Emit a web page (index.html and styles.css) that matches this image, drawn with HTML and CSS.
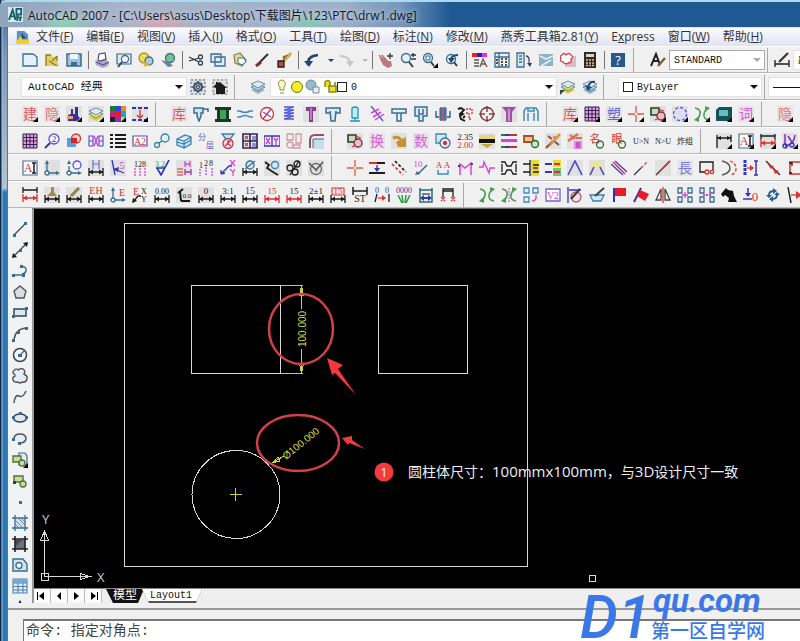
FILE: index.html
```html
<!DOCTYPE html>
<html lang="zh-CN">
<head>
<meta charset="utf-8">
<title>AutoCAD 2007</title>
<link rel="stylesheet" href="styles.css">
</head>
<body>
<div class="window">
  <header class="titlebar">
    <svg class="app-icon" viewBox="0 0 16 16" aria-hidden="true">
      <rect width="16" height="16" fill="#d4ecec"/>
      <path d="M1 14L5 3l3 11M2 10h5M9 2v6h5V2zM8 11h7M10 9v6M13 10v5" fill="none" stroke="#14606c" stroke-width="2"/>
    </svg>
    <span class="title-text">AutoCAD 2007 - [C:\Users\asus\Desktop\下载图片\123\PTC\drw1.dwg]</span>
  </header>
  <div class="body">
    <nav class="menubar">
      <svg class="doc-icon" viewBox="0 0 16 16" aria-hidden="true">
        <path d="M2 1h8l4 4v8H2z" fill="#5d8fc4"/><path d="M0 15l6-9 2 4h7v5z" fill="#f2cf27"/><path d="M7 3l5 6H7z" fill="#234c8b"/>
      </svg>
      <a href="#">文件(<u>F</u>)</a><a href="#">编辑(<u>E</u>)</a><a href="#">视图(<u>V</u>)</a><a href="#">插入(<u>I</u>)</a><a href="#">格式(<u>O</u>)</a><a href="#">工具(<u>T</u>)</a><a href="#">绘图(<u>D</u>)</a><a href="#">标注(<u>N</u>)</a><a href="#">修改(<u>M</u>)</a><a href="#">燕秀工具箱2.81(<u>Y</u>)</a><a href="#">E<u>x</u>press</a><a href="#">窗口(<u>W</u>)</a><a href="#">帮助(<u>H</u>)</a>
    </nav>

    <div class="row">
      <div class="toolbar" data-tools="new open save | print preview publish globe | cut copy paste brush match | undo drop:s redo dropg:s | pan zoomrt zoomwin zoomprev | props dcenter palettes sheet markup calc | help"></div>
      <div class="toolbar styles">
        <button class="tool" data-icon="textstyle" aria-label="文字样式"></button>
        <span class="combo muted w-style"><select aria-label="文字样式"><option>STANDARD</option></select></span>
      </div>
      <div class="toolbar styles tight">
        <button class="tool" data-icon="dimstyle" aria-label="标注样式"></button>
        <span class="combo w-rest"><select aria-label="标注样式"><option>副本</option></select></span>
      </div>
    </div>

    <div class="row">
      <div class="toolbar workspaces">
        <span class="combo w-workspace"><select aria-label="工作空间"><option>AutoCAD 经典</option></select></span>
        <button class="tool" data-icon="gear" aria-label="工作空间设置"></button>
        <button class="tool" data-icon="home" aria-label="我的工作空间"></button>
      </div>
      <div class="toolbar layers">
        <button class="tool" data-icon="layerman" aria-label="图层特性"></button>
        <span class="combo w-layer">
          <svg class="state" viewBox="0 0 66 16" aria-hidden="true">
            <path d="M6 1a4 4 0 0 1 3 7v3H5V8a4 4 0 0 1 1-7zM5 14h4" fill="#fdfbc0" stroke="#8d8a46"/>
            <circle cx="22" cy="8" r="5.500" fill="#f6ee25" stroke="#77711a"/>
            <circle cx="36" cy="6" r="5" fill="#9ab9cc" stroke="#6e8798"/><path d="M38 8h6v6h-6z" fill="#e8eef2" stroke="#6e8798"/>
            <path d="M50 8V3q3-3 5 0v5M54 7h7v6h-7zM60 7V3" fill="#e9e32a" stroke="#8d861a" stroke-width="1.500"/>
          </svg>
          <i class="swatch"></i>
          <select aria-label="图层"><option>0</option></select>
        </span>
        <button class="tool" data-icon="layercur" aria-label="置为当前"></button>
        <button class="tool" data-icon="layerprev" aria-label="上一个图层"></button>
      </div>
      <div class="toolbar colors">
        <span class="combo w-color"><i class="swatch"></i><select aria-label="颜色"><option>ByLayer</option></select></span>
      </div>
      <div class="toolbar linetype">
        <span class="combo w-rest"><i class="line"></i></span>
      </div>
    </div>

    <div class="row">
      <div class="toolbar" data-tools="build+ hide+ hand+ layers+ palette+ dashdim+"></div>
      <div class="toolbar" data-tools="lib nozzle spool beam noentry spring bolt tee capsule diagspring teeb block coupling chain target screw bracket"></div>
      <div class="toolbar" data-tools="lib+ grid+ plastic+ cross+ shapes+ dashcircle+ greens+ screen+ word+"></div>
      <div class="toolbar" data-tools="hide+"></div>
    </div>
    <div class="row">
      <div class="toolbar" data-tools="grid lens boolean eight list a2 linkc box3d strata funnel tablered xy pinks fillet"></div>
      <div class="toolbar" data-tools="shapes swapcn turn number circsel values bands lines copyc bolt1 bolt2 name look un nu explode"></div>
      <div class="toolbar" data-tools="dimk+ ai+ dimr+ trim+"></div>
    </div>
    <div class="row">
      <div class="toolbar" data-tools="ai axes axeso hdim arrow5 n123m check32 hhred n123 xyline odim oleader oo oslash"></div>
      <div class="toolbar" data-tools="cross updown twodash ten aa zigm zign ends break1 break2 vee vee2 slashes slashd slash long boxo arcs ticks redline rbracket"></div>
    </div>
    <div class="row">
      <div class="toolbar" data-tools="dimrr dimbrush dimpen dimeh axese exy dim000 lead0 dim0 dim31 dim15b dim15r dim15 dim21 dim15x dim51 dimoo dimgrass dimbox dimx"></div>
      <div class="toolbar" data-tools="greens greens2 shapesb v2 pencirc bowl flag1 flag2 mirror array1 array2 cursor zero recycle rightred"></div>
    </div>

    <main class="workspace">
      <div class="drawbar" data-tools="line xline pline polygon rect arc circle cloud spline ellipse ellarc insert block2 point hatch gradient region table up:t"></div>
      <section class="model">
        <svg class="drawing" role="img" aria-label="模型空间">
          <g transform="translate(-34 -209)" fill="none" shape-rendering="crispEdges">
            <g stroke="#d8d8d8">
              <path d="M124.500 223.500H527.500V566.500H124.500z"/>
              <path d="M191.500 285.500H280.500V373.500H191.500zM378.500 285.500H467.500V373.500H378.500z"/>
              <circle cx="236" cy="494.500" r="44"/>
              <path d="M41.500 573.500h7v7h-7zM44.500 576.500V532M44.500 576.500H90M40.500 540.500h8L44.500 531zM80.500 573.500v6L90 576.500z"/>
              <path d="M589.500 575.500h6v6h-6z"/>
            </g>
            <g stroke="#cccf45">
              <path d="M281 285.500h22M281 373.500h22M301.500 286V309M301.500 349V373M230 494.500h12M235.500 488v13"/>
              <path d="M301.500 286l-2 9h4zM301.500 373l-2-9h4zM272 463l12-7M272 463l6-6 2 4z"/>
            </g>
          </g>
          <g transform="translate(-34 -209)">
            <text class="dimension" text-anchor="middle" transform="translate(306 329) rotate(-90)">100.000</text>
            <text class="dimension" transform="translate(286 460) rotate(-39)">Ø100.000</text>
            <text class="axis" x="42" y="524">Y</text><text class="axis" x="97" y="582">X</text>
            <g fill="none" stroke="#d2404a" stroke-width="2.500">
              <ellipse cx="301" cy="329" rx="32" ry="35"/><ellipse cx="298" cy="443" rx="41" ry="28"/>
            </g>
            <g fill="#f23a3f">
              <path d="M327 358l16 7-5 4 18 26-21-22-3 2zM342 438l10-2v4l13 9-16-6-1 2z"/>
              <circle cx="384" cy="472" r="9.500"/>
            </g>
            <text class="badge" x="384" y="477" text-anchor="middle">1</text>
            <text class="note" x="408" y="477">圆柱体尺寸：<tspan class="latin">100mmx100mm</tspan>，与<tspan class="latin">3D</tspan>设计尺寸一致</text>
          </g>
        </svg>
        <div class="tabs">
          <div class="pager">
            <button aria-label="第一个"><svg viewBox="0 0 16 14"><path d="M3 3h1v8H3zM10 3v8L5 7z"/></svg></button>
            <button aria-label="上一个"><svg viewBox="0 0 16 14"><path d="M10 3v8L6 7z"/></svg></button>
            <button aria-label="下一个"><svg viewBox="0 0 16 14"><path d="M6 3v8l5-4z"/></svg></button>
            <button aria-label="最后一个"><svg viewBox="0 0 16 14"><path d="M6 3v8l5-4zM12 3h1v8h-1z"/></svg></button>
          </div>
          <button class="tab active">模型</button>
          <button class="tab">Layout1</button>
        </div>
      </section>
    </main>

    <footer class="command">
      <label class="sr" for="cmd">命令行</label>
      <input id="cmd" class="prompt" value="命令: 指定对角点:">
    </footer>
  </div>

  <div class="watermark">
    <span class="mark">D1</span>
    <span class="site"><b>qu.com</b><span>第一区自学网</span></span>
  </div>
</div>
<script src="icons.js"></script>
</body>
</html>
```
FILE: styles.css
```css
* { box-sizing: border-box; }

body {
  margin: 0;
  font-family: "Open Sans", "Noto Sans CJK SC", sans-serif;
  font-size: 12px;
  color: #222;
}

.window {
  position: relative;
  display: flex;
  flex-direction: column;
  height: 100vh;
  overflow: hidden;
  background: linear-gradient(90deg, #12294a 0, #12294a 1px, #a9cde4 2px, transparent 3px), linear-gradient(#3f6c9c 0, #7f9bb8 60px, #b4c3d2 188px, #2b78b4 192px, #2b78b4 100%);
}

.titlebar {
  flex: none;
  display: flex;
  align-items: center;
  gap: 5px;
  height: 27px;
  padding-left: 8px;
  border-top: 2px solid #a8dcec;
  border-radius: 6px 0 0 0;
  background:
    radial-gradient(30px 14px at 65px 22px, #8fd0b0 0, transparent 100%),
    radial-gradient(30px 14px at 310px 22px, #86c6b4 0, transparent 100%),
    radial-gradient(36px 16px at 160px 22px, #d2a6b2 0, transparent 100%),
    linear-gradient(90deg, #8ea5bd 0, #a7b5ca 130px, #9fb0c9 340px, #7796bb 400px, #1f5892 450px, #1f5892 100%);
  color: #10182c;
}

.app-icon { width: 15px; height: 15px; }
.title-text { white-space: nowrap; text-shadow: 0 0 5px #dfe9f4; }

.body {
  flex: 1;
  display: flex;
  flex-direction: column;
  min-height: 0;
  margin-left: 7px;
  border-left: 1px solid #68727e;
  background: #f0f0f0;
}

.menubar {
  flex: none;
  display: flex;
  align-items: center;
  gap: 13px;
  height: 19px;
  padding-left: 7px;
  overflow: hidden;
  background: linear-gradient(#fbfbff, #e0e3f5);
  border-top: 1px solid #dfe6ee;
}
.menubar a { color: #333; text-decoration: none; white-space: nowrap; line-height: 18px; }
.doc-icon { width: 15px; height: 15px; margin-right: -7px; }

.row {
  flex: none;
  display: flex;
  height: 27px;
  padding-top: 2px;
  overflow: hidden;
  border-bottom: 1px solid #b8b8b8;
  box-shadow: inset 0 1px #fff;
}

.toolbar {
  flex: none;
  display: flex;
  align-items: center;
  padding: 0 4px 0 12px;
  border-right: 1px solid #a8a8a8;
}
.toolbar:first-child { padding-left: 11px; }
.toolbar:last-child { border-right: 0; }

.tool {
  flex: none;
  display: grid;
  place-items: center;
  width: 22px;
  height: 21px;
  padding: 0;
  border: 0;
  background: none;
}
.tool svg { display: block; width: 16px; height: 16px; overflow: hidden; }
.tool.s { width: 12px; }
.tool.t { height: 12px; }
.sep { width: 1px; height: 18px; margin: 0 2px 0 3px; background: #777; }

.combo {
  flex: none;
  display: flex;
  align-items: center;
  height: 20px;
  background: #fff;
  border: 1px solid #e2e2e2;
  position: relative;
}
.combo select {
  appearance: none;
  flex: 1;
  min-width: 0;
  height: 18px;
  padding: 0 4px;
  border: 0;
  background: none;
  color: #111;
  font: 10px "Liberation Mono", "Noto Sans CJK SC", monospace;
}
.combo::after {
  content: "";
  margin-right: 3px;
  border: 4px solid transparent;
  border-top-color: #111;
  border-bottom: 0;
}
.combo.muted { border-color: #aaa; }
.combo.muted::after { border-top-color: #aaa; }
.w-workspace { width: 166px; }
.combo.w-workspace select { padding-left: 6px; font-size: 11px; }
.w-style { width: 96px; }
.w-layer { width: 287px; }
.w-color { width: 144px; }
.w-rest { width: 120px; }
.swatch { flex: none; width: 10px; height: 10px; border: 1px solid #222; }
.state { flex: none; width: 66px; height: 16px; margin: 0 -4px 0 4px; }
.line { flex: 1; height: 1px; margin: 0 4px; background: #111; }

.workspaces { padding-right: 3px; }
.toolbar.workspaces { padding-left: 13px; }
.toolbar.layers { padding: 0 2px 0 12px; }
.toolbar.layers .combo { margin-left: 1px; }
.toolbar.colors { padding: 0 2px 0 14px; }
.toolbar.colors .swatch { margin-left: 4px; }
.toolbar.linetype { padding: 0 0 0 3px; }
.toolbar.styles { padding: 0 2px 0 13px; }
.toolbar.styles.tight { padding: 0 0 0 3px; }

.workspace {
  flex: 1;
  display: flex;
  min-height: 0;
}

.drawbar {
  flex: none;
  display: flex;
  flex-direction: column;
  align-items: center;
  width: 24px;
  padding-top: 10px;
  overflow: hidden;
  background: #f0f2f4;
}

.model {
  flex: 1;
  display: flex;
  flex-direction: column;
  min-width: 0;
  border-left: 2px solid #9a9a9a;
  border-top: 1px solid #666;
}
.drawing { flex: 1; display: block; width: 100%; min-height: 0; background: #000; }
.dimension { fill: #d9dc4c; font: 10px "Liberation Sans", sans-serif; }
.axis { fill: #ccc; font: 13px "Open Sans", sans-serif; }
.badge { fill: #fff; font: 12px "Open Sans", sans-serif; }
.note { fill: #eee; font: 14px "Open Sans", "Noto Sans CJK TC", sans-serif; }
.latin { font-size: 15px; }

.tabs {
  flex: none;
  display: flex;
  height: 15px;
  background: #efefef;
  border-top: 1px solid #888;
}
.pager { display: flex; }
.pager button { width: 17px; height: 14px; padding: 0; border: 0; border-right: 1px solid #bbb; background: #fafafa; }
.pager svg { display: block; width: 16px; height: 14px; }
.tab {
  padding: 0 10px 0 8px;
  border: 0;
  background: linear-gradient(#fff, #fff) 0 0 / 100% 12px no-repeat, #555;
  clip-path: polygon(0 0, 100% 0, calc(100% - 6px) 100%, 7px 100%);
  font: 10px/12px "Liberation Mono", "Noto Sans CJK SC", monospace;
  color: #111;
}
.tab:not(.active) { margin-left: -2px; }
.tab.active { margin-left: 4px; padding: 0 7px; background: #111; color: #fff; font-size: 12px; }

.command {
  flex: none;
  margin-top: 5px;
  padding: 9px 0 0 15px;
  border-top: 2px solid #999;
}
.prompt {
  display: block;
  width: 100%;
  height: 22px;
  padding: 0 2px 4px;
  border: 0;
  border-top: 2px solid #777;
  border-left: 1px solid #777;
  background: #fff;
  color: #444;
  font: 14px "Liberation Mono", "Noto Sans CJK SC", monospace;
}
.sr { position: absolute; clip-path: inset(50%); width: 1px; height: 1px; overflow: hidden; }

.watermark {
  position: absolute;
  right: 35px;
  bottom: 0;
  display: flex;
  align-items: flex-end;
  color: #3b78e7;
  pointer-events: none;
}
.mark { font: italic 500 60px/46px Roboto, sans-serif; }
.site { display: flex; flex-direction: column; }
.site b { padding-left: 2px; font: italic 700 33px/36px Roboto, sans-serif; }
.site span { font: 500 19px/22px "Noto Sans CJK SC", sans-serif; }
```
FILE: icons.js
```js
const K = '#1c1c1c', R = '#dd2f2f', B = '#3434b8', G = '#2f9a3a', M = '#d942d9', S = '#3a6c90', O = '#c8922c', P = '#a03aa8';

// Shape helpers; every icon is drawn on a 16 x 16 grid.
const p = (d, stroke = K, w = 1.3, fill = 'none') => `<path d="${d}" stroke="${stroke}" stroke-width="${w}" fill="${fill}"/>`;
const f = (d, fill = K) => `<path d="${d}" fill="${fill}"/>`;
const c = (x, y, r, stroke = K, fill = 'none', w = 1.3) => `<circle cx="${x}" cy="${y}" r="${r}" stroke="${stroke}" fill="${fill}" stroke-width="${w}"/>`;
const t = (s, x, y, size, fill = K, family = 'Liberation Serif') =>
  `<text x="${x}" y="${y}" font-size="${size}" fill="${fill}" font-family="${family}, Noto Sans CJK SC, serif" text-anchor="middle">${s}</text>`;
const cn = (s, fill) => f('M0 0h16v16H0z', '#e6e4e6') + t(s, 8, 13, 14, fill, 'Noto Sans CJK SC');
const bg = f('M0 0h16v16H0z', '#e0e0e1');
const dim = (col = K, y = 12) => p(`M1 ${y - 4}v8M15 ${y - 4}v8M1 ${y}h14`, col) + f(`M1 ${y}l4-2.500v5zM15 ${y}l-4-2.500v5z`, col);
const label = (s, col = K, line = K, size = 9) => t(s, 8, 7, size, col) + dim(line);
const corner = f('M16 11v5h-5z', '#000');
const ax = p('M3 2v11h11', S) + f('M3 0l2 4H1zM16 13l-4-2v4z', S) + c(3, 13, 2, S, '#fff');
const lay = (a, b2) => f('M1 11l7-3 7 3-7 4z', a) + p('M1 8l7-3 7 3-7 4z', S, 0.7, b2) + p('M1 5l7-3 7 3-7 4z', S, 0.7, '#dde8ef');
const green = p('M1 2q6 1 5 6t-5 6M15 14q-6-1-5-6t5-6', '#4f9f50', 1.6) + f('M5 10l-5 4 5 2zM11 6l5-4-5-2z', '#4f9f50');
const squares = p('M1 1h4v5H1zM11 1h4v5h-4zM1 10h4v5H1zM11 10h4v5h-4z', S);
const gridp = 'M1 1h14v14H1zM1 4.500h14M1 8h14M1 11.500h14M4.500 1v14M8 1v14M11.500 1v14';
const flagp = (a) => p('M3 1v14', B, 2) + f(a, '#e81c24');

const icons = {
  new: p('M1 2h10l4 3v9H1z', S, 1.3, '#e4f0f8'),
  open: f('M2 14V3h6l1 2h4v3l2 6z', '#e2cf5c') + p('M2 14V3h5M8 9l5-5M13 4v5M5 9l8 5', '#8a7a28'),
  save: p('M1 2h14v12H1z', S, 1.5, '#9cc2dc') + f('M4 2h8v5H4z', '#eef5fa') + f('M5 10h6v4H5z', S),
  print: f('M1 9l11-2 3 4-1 3-5 2-7-3z', '#aaa4c8') + p('M4 8l1-6 6-1 1 6-6 2z', '#4d4a73', 1.2, '#fff') + p('M2 10l7 3 6-3', '#4d4a73', 1),
  preview: p('M1 2h14v10H1z', S, 1.2, '#dce9f3') + c(9, 7, 3.5, S, '#fff') + p('M6 10l-4 5', '#345', 2),
  publish: c(6, 6, 5, '#a8922c', '#f1dc57') + c(11, 9, 4, S, '#b2cbdc') + f('M4 9l8 3-5 3z', '#d9b735'),
  globe: c(10, 6, 4.5, S, '#7bbf8b') + f('M1 8l8 2 4 4-5 1z', '#6d7fa0'),
  cut: p('M1 5l10 5M1 9l10-3', '#234') + c(12.500, 5, 2, '#345') + c(12.500, 11, 2, '#345'),
  copy: p('M1 2h10v8H1zM5 5h10v9H5z', S, 1.3, '#dcebf5'),
  paste: p('M2 3l6-2 6 7-4 6-7-3z', '#8b873f', 1.3, '#ddd9a3') + p('M6 6h6l2 4-4 3-4-2z', S, 1, '#fff'),
  brush: p('M2 14l5-4', '#7b3030', 3) + p('M6 10l8-8', '#3a2b2b', 2),
  match: f('M2 9h6v6H2z', '#c4483a') + p('M8 9L15 1M8 9l0-4 6-2', '#8f7420', 2.4) + p('M8 9L15 1', '#ead04a', 1.2) + p('M2 9h6v6H2z'),
  undo: p('M4 13Q3 4 14 3', '#1f4877', 2.6) + f('M0 9h9l-4 6z', '#1f4877'),
  redo: p('M2 4Q12 4 12 12', '#c3c7cb', 2.2) + f('M8 9h8l-4 6z', '#c3c7cb'),
  drop: f('M5 7h6l-3 3z', '#1f3c66'), dropg: f('M5 7h6l-3 3z', '#b8b8b8'),
  pan: f('M1 5l4 2 1-2 4 4 3 0 1 5-4 2-5-3z', '#bd7780') + p('M1 3l6 6M4 3l5 6', '#bd7780', 1.6) + p('M12 1v6M9 4h6', '#334'),
  zoomrt: c(6, 6, 4.5, S, '#e6f0f6') + p('M9 10l4 5', '#344', 2) + p('M13 1v4M11 3h5M11 7h5', '#334'),
  zoomwin: c(6, 6, 4.5, S, '#e6f0f6') + p('M4 4h4v4H4z', S, 1) + p('M9 10l3 4', '#344', 2) + corner,
  zoomprev: c(7, 7, 4.5, S, '#e6f0f6') + p('M10 10l3 4', '#344', 2) + p('M7 8q0-5 7-5', '#1f4877', 2) + f('M4 6h7l-4 5z', '#1f4877'),
  props: f('M0 1h5v4H0z', '#e22') + f('M5 1h5v4H5z', '#22c') + f('M10 1h5v4h-5z', '#d3d') + p('M2 8h5M2 11h5M2 14h5M8 15l3-8 4 8M9 12h4', '#655'),
  dcenter: p('M1 1h14v14H1zM5 1v14M1 5h14', S) + p('M7 7h2M11 7h2M7 10h2M11 10h2M7 13h2M11 13h2M2 8h2M2 11h2', K),
  palettes: p('M1 1h7v14H1zM3 4h3M3 7h3M3 10h3', S, 1.3, '#dbe8f1') + p('M10 4q4 0 3 8', '#345') + f('M11 11h5l-2 4z', '#345'),
  sheet: f('M1 2h14v12H1z', '#8fb2c2') + p('M2 4l6 3 7-3M3 14l10-6', '#e0edf2', 1.8),
  markup: f('M5 4h11v11H5z', '#d9bcc3') + p('M2 3q2-3 4 0 3-3 5 0 3 2 0 4 1 4-3 4-3 2-5-1-4-1-2-4-2-2 1-3z', '#d33c52', 1.3, '#fff'),
  calc: f('M2 0h12v16H2z', '#33291f') + f('M4 2h8v3H4z', '#d8d6c8') + p('M4 8h8M4 11h8M4 13.500h8', '#d8c6b0', 1.3).replace('/>', ' stroke-dasharray="2 1"/>'),
  help: f('M1 1h14v14H1z', '#24598d') + t('?', 8, 13, 13, '#fff', 'Open Sans'),
  textstyle: p('M1 14L6 2l4 11M3 9h6', '#222', 2) + p('M8 14l7-8', '#7a6032', 2.4),
  dimstyle: p('M1 8v7M15 8v7M1 12h14', K) + p('M5 10l9-9', '#433', 2.3),
  gear: bg + p('M1 1h14v14H1z', S, 1).replace('/>', ' stroke-dasharray="2 2"/>') + c(8, 8, 4, '#456', '#aab8c2', 2) + p('M8 2v3M8 11v3M2 8h3M11 8h3M4 4l2 2M10 10l2 2M12 4l-2 2M6 10l-2 2', '#456', 1.6) + c(8, 8, 1.5, '#456', '#fff'),
  home: bg + p('M1 1h14v14H1z', '#777', 1).replace('/>', ' stroke-dasharray="2 2"/>') + f('M1 8l3-3V3h2v1l2-1 7 6h-2v6H4V9z', K),
  layerman: lay('#9eb6c6', '#b9cdd9'), layercur: lay('#e0cf3c', '#e8dc68') + f('M0 16v-5h5z', '#345'),
  layerprev: lay('#8fb0c6', '#b9cdd9') + p('M6 8Q8 2 13 3', '#1f4877', 2) + f('M3 6l7 2-4 4z', '#1f4877'),

  build: cn('建', '#e0555a'), hide: cn('隐', '#df7678'), lib: cn('库', '#e0555a'), plastic: cn('塑', '#6464d8'), word: cn('词', '#e354dd'),
  swapcn: cn('换', '#dd5bdd'), number: cn('数', '#dd5bdd'), long: cn('長', '#7a7ae0'),
  hand: bg + f('M2 9l3-1V3h2v5h2V1h3v9l2 2-3 3H2z', '#37308e') + f('M1 10h6v3H1z', '#ef9c78'),
  layers: bg + lay('#d7cf39', '#ece487'),
  palette: f('M0 0h5v5H0z', '#1e7b2d') + f('M5 0h6v5H5z', '#2c40ea') + f('M11 0h5v5h-5z', '#ee8a20') + f('M0 5h5v6H0z', '#c0207c') + f('M5 5h6v6H5z', '#e81d1d') + f('M11 5h5v6h-5z', '#19a4d8') + f('M0 11h5v5H0z', '#222') + f('M5 11h6v5H5z', '#7638c0') + f('M11 11h5v5h-5z', '#e0d43a'),
  dashdim: bg + p('M0 2h16M0 14h16', B, 2).replace('/>', ' stroke-dasharray="4 2"/>') + p('M8 4v8M5 9l3 3 3-3', R),
  nozzle: p('M1 2h9v5H8v3l-2 5-2-5V7H1zM10 3h5v3', S, 1.5, '#cde3ef'),
  spool: f('M0 1h16v3h-2v9h2v3H0v-3h2V4H0z', '#173a22') + f('M5 4h6v9H5z', '#41a05a'),
  beam: p('M0 5h3q5 3 10 0h3M0 11h3q5-3 10 0h3', '#4a8abb', 1.6, '#d8eaf5'),
  noentry: c(8, 8, 6.5, R, '#fff') + p('M12 3L4 13M4 6l8 5', P),
  spring: p('M3 1h10L3 4h10L3 7h10L3 10h10L3 13h10', '#4d53d8'),
  bolt: bg + f('M3 1h10v4h-3v11H6V5H3z', '#8b3a93') + p('M8 2v12', '#d9a0da'),
  tee: p('M1 2h14v5h-4V5l-1 10H6L5 5v2H1z', S, 1.5, '#d6ebf4'),
  capsule: p('M5 2q3-2 6 0v10H5zM3 15h10M8 12v3', '#2490c0', 1.3, '#c3edf4'),
  diagspring: p('M2 0l12 15', '#4d53d8') + p('M2 7l8-4M4 11l8-5M6 14l9-6', M, 1.5),
  teeb: p('M1 3h14v4H1zM6 7h4v8H6z', S, 1.5, '#e4f1f7'),
  block: p('M2 1h12v9h-4v5H6v-5H2zM6 3v5h4V3', S, 1.5, '#d6ebf4'),
  coupling: f('M4 2h8v12H4z', '#86a9d0') + p('M6 1v14M10 1v14M1 5v6h3M15 5v6h-3', '#2a4f88') + p('M8 1v14', R),
  chain: p('M1 3l3-1 3 2-3 3 2 1-3 2 1 3 4 2M2 8l4-1M6 12l2-2', K, 1.9) + p('M9 3h6v6M9 7h3v6h3', R).replace('/>', ' stroke-dasharray="2 1"/>'),
  target: c(8, 8, 6.5, '#5c3030') + p('M8 0v6M8 10v6M0 8h6M10 8h6', '#a03a3a', 1.5),
  screw: bg + f('M1 1h14l-4 5v10H5V6z', '#a050a8') + p('M8 3v12', '#e6b6e6'),
  bracket: p('M1 15V5l2-3h10l2 3v10M5 15V7M11 15V7M5 2v3h6V2', '#3c8cb4', 1.5),
  grid: f('M1 1h14v14H1z', '#d7a6dc') + p(gridp, '#3b1b50', 1),
  cross: p('M8 0v16M0 8h16', '#e2583a', 1.3) + f('M7 7h2v2H7z', '#fff'),
  shapes: bg + p('M1 2h8v7H1z', '#2c3c2c', 1.6, '#c2dcc6') + c(11, 10, 4, '#7b2c3c', '#e6c1c6') + p('M8 3l6 2M5 14l4-2', R),
  dashcircle: bg + c(8, 8, 6.5, '#5253d6', '#dedef0').replace('/>', ' stroke-dasharray="3 2"/>'),
  greens: green, greens2: green + p('M8 1v14', M, 1).replace('/>', ' stroke-dasharray="2 1"/>'),
  screen: f('M3 1h13v10l-3 4H0V4z', '#15525a') + f('M3 4h9v6H3z', '#62c0b9'),

  lens: c(10, 6, 5, '#5a5acb', '#f4f4ff') + t('2', 10, 9, 9, B) + p('M6 10l-5 5', B, 2),
  boolean: c(10, 5.500, 4.500, R, '#f5d3c8') + f('M1 5h9v9H1z', '#5d9dd9') + f('M5 5h6v5H5z', '#d8212f'),
  eight: p('M1 3h4v10H1zM1 8h4M11 3h4v10h-4zM11 8h4', '#4f4fc2', 1.1) + p('M6 3l4 10M10 3L6 13', M, 1.5),
  list: p('M5 2h11M5 6h11M5 10h11M5 14h11M0 2h3M0 6h3M0 10h3M0 14h3', K, 2),
  a2: p('M1 3h14v10H1z', '#4f4fc2', 1.2, '#fff') + t('A2', 8, 12, 10, R),
  linkc: c(11, 5, 4, '#3e7fa0', '#e0f2f6') + c(3, 12, 2.5, '#3e7fa0', '#e0f2f6') + p('M5 10l3-2', S),
  box3d: p('M1 6l8-4 6 2v7l-7 4-7-3zM1 6l7 2 7-4M8 8v7M1 9l7 2 7-4', '#3a80b4', 1.3, '#c7e4f2'),
  strata: t('分', 4, 7, 8, '#5a5ad0') + t('层', 12, 15, 8, '#5a5ad0'),
  funnel: p('M2 1h12l-4 5H6z', '#3a80b4', 1.3, '#c7e4f2') + c(8, 10.500, 5, '#a8406c', '#f5dfe6') + p('M8 7v4l3 2M5 13l6-6', R),
  tablered: p('M1 1h14v14H1zM8 1v14M1 8h14', '#262650', 1.6, '#f3eff4') + p('M3 3l3 3M6 3L3 6M3 10l3 3M6 10l-3 3', R, 1.2) + p('M10 4h4M10 6h4M10 11h4M10 13h4', B, 1),
  xy: p('M0 3h16v10H0zM8 3v10', B) + p('M2 5l4 6M6 5l-4 6M10 5l2 3 2-3M12 8v4', M, 1.4),
  pinks: p('M1 1h6v6H1zM10 1h5v9h-5zM7 12h7v3H7z', '#cf9aa0') + c(4, 12, 3, '#cf9aa0'),
  fillet: f('M5 6h11v10H5z', '#cbdce3') + p('M2 15V7q0-5 5-5h9', '#99505a', 2) + p('M5 15V6h11', S, 1),
  turn: bg + p('M2 5q7-3 9 5', '#c99230', 3) + f('M5 9l10-5v10H7z', '#c99230'),
  circsel: p('M1 1h10v9H1z', '#3c86b0', 1.3, '#d4eaf2') + c(10, 10, 5, '#3c6fa0', '#e3edf6') + c(10, 10, 1.5, R, R),
  values: t('2.35', 8, 7, 9, K) + t('2.00', 8, 15, 9, R),
  bands: bg + f('M0 2h16v4H0z', '#e5d578') + f('M0 6h16v4H0z', '#111') + f('M2 11h12l-6 4z', '#bda93c'),
  lines: f('M0 6h16v3H0z', '#e03ad8') + f('M0 1h4v2H0zM0 13h4v2H0z', '#347b30') + f('M4 1h4v2H4zM4 13h4v2H4z', '#333c9c') + f('M8 1h8v2H8zM8 13h8v2H8z', '#b83636'),
  copyc: p('M1 3h9v6H1z', '#a84f22', 1.8, '#f1c690') + c(12, 11, 3.5, '#236a2c', '#cae6c8'),
  bolt1: bg + p('M1 15l7-7M3 3l4 3M9 8l5 4', '#86573a', 2) + p('M5 12L15 1M8 4l5 1', '#e18c3c', 2.4),
  bolt2: bg + p('M1 8L11 1M3 2l5 4M9 5h6', '#e06a55', 2.2) + f('M7 8h8v8H7z', '#e58ae0') + p('M9 10h4M9 12h4M9 14h4', '#a02bb0', 1),
  name: t('名', 6, 10, 11, R) + c(11, 11.500, 3.500, '#2b6b35'),
  look: t('眼', 6, 10, 11, R) + c(11, 11.500, 3.500, '#2b6b35'),
  un: t('U&gt;N', 8, 11, 8), nu: t('N&gt;U', 8, 11, 8), explode: t('炸组', 8, 11, 8),
  dimk: bg + p('M1 2v13M15 2v7M1 5h14', K) + f('M1 5l4-2v4zM15 5l-4-2v4z', K),
  ai: p('M1 1h14v14H1z', '#4b6f90', 1.2, '#fff') + t('A', 6, 12, 12, R) + p('M12 3v10M10 3h4M10 13h4', K, 1.5),
  dimr: bg + dim(R, 10) + p('M1 1v5M15 1v5M1 3h14', K),
  trim: bg + p('M3 1v11M3 13Q12 12 13 2M6 3l5 8', '#7c2ec4', 1.5) + c(3, 13, 2, B) + c(10, 12, 2, B),

  axes: bg + ax, axeso: ax.replace('M3 2v11h11', 'M3 6v7h11') + c(11, 5, 4, '#5555d0', '#f3f3ff'),
  hdim: bg + p('M5 0v9M11 0v9M5 4h6', '#6b6bd0', 1.2) + dim(),
  arrow5: bg + p('M2 0l3 15M14 13L4 9', B) + f('M3 9l6-2-1 5z', B) + t('5', 12, 9, 10, M),
  n123m: t('128', 8, 7, 8) + p('M3 8v8M8 8v8M13 8v8', M).replace('/>', ' stroke-dasharray="2 1"/>'),
  check32: t('3.2', 6, 7, 8, G) + p('M2 8h9M3 8l4 7L15 0', B, 1.6),
  hhred: bg + p('M9 1v6M14 1v6M9 4h5', M) + p('M1 9h6M1 12h6M1 15h6', R, 1) + p('M9 9v6M15 9v6M9 12h6', P),
  n123: p('M2 9v7M8 7v9M14 8v8', M).replace('/>', ' stroke-dasharray="2 1"/>') + t('1', 3, 8, 8) + t('2', 8, 6, 8) + t('8', 13, 6, 8),
  xyline: p('M1 14L9 6h3M1 14l4-1M1 14V10', B) + p('M10 0l5 6M15 0l-5 6M10 9l3 3 2-3M13 12v4', M, 1.2),
  odim: c(8, 5, 4, S, '#d5e9f2') + p('M3 9L13 1', S) + dim(),
  oleader: bg + p('M1 2l4 3-2 3 6 4 5 3', K, 1.8) + c(11, 5, 3.500, '#3e7fb0', '#d5e9f2'),
  oo: bg + p('M4 15L13 1', K) + c(4, 8, 3, K) + c(11, 4, 3, K) + c(9, 12, 3, K),
  oslash: bg + c(8, 9, 5.500, '#666') + p('M1 3l8 8M15 2l-7 8', '#555', 1.6),
  updown: p('M0 3h16M0 13h16', K, 1.8) + p('M0 3h8', R, 2) + p('M8 5v6', B) + f('M5 8h6l-3 4z', B),
  twodash: p('M4 1l11 11', K, 1.6).replace('/>', ' stroke-dasharray="3 2"/>') + p('M1 4l11 11', R, 1.6).replace('/>', ' stroke-dasharray="3 2"/>'),
  ten: t('10', 5, 7, 9, M) + p('M5 14l9-9', S, 1.6) + f('M2 15l5-1-3-3z', S),
  aa: t('A', 4, 8, 9, R) + t('A', 12, 8, 9, R) + p('M3 10v4h10v-4', '#3c8cc0', 1.5),
  zigm: p('M3 15V4l5 4 6-5v12', M, 1.5) + p('M1 6h2M14 4h2', K),
  zign: p('M0 7h4l1-5 5 11 1-5h5', M, 1.4),
  ends: p('M0 2h4l2 4h4l2-4h4M0 14h4l2-4h4l2 4h4M1 4v8M15 4v8', K, 1.3),
  break1: f('M8 0h8v16H8z', '#e5de39') + p('M0 4h7M0 12h7M10 5h6M10 12h6M7 0v16', K) + p('M10 8h5', R, 2),
  break2: f('M8 0h8v7H8z', '#e5de39') + f('M8 8h8v8H8z', '#70c47d') + p('M0 4h7M0 12h7', B, 2) + p('M9 4h6M9 12h6', R, 2),
  vee: bg + p('M1 15L8 1l7 14', '#4646cc', 1.6),
  vee2: bg + f('M4 2h8l2 6H2z', '#ece690') + p('M1 15l4-8M15 15l-4-8', '#4646cc', 1.6),
  slashes: p('M0 4l12 11M4 1l12 11', '#4646cc', 1.4) + p('M2 2l12 12', R, 1.4),
  slashd: p('M1 15l7-7', '#333') + p('M8 8l7-7', R).replace('/>', ' stroke-dasharray="3 2"/>'),
  slash: bg + p('M1 15L15 1', '#6b3a3a', 1.6) + p('M8 8l7-7', R, 1.4),
  boxo: p('M6 12H1V2h13v8', K) + c(8, 12, 2, R) + c(13, 12, 1.7, R),
  arcs: p('M1 1q8 2 8 7t-8 7', '#555', 1.5) + p('M9 1q6 2 6 8 0 4-5 6', R, 1.3).replace('/>', ' stroke-dasharray="3 2"/>'),
  ticks: p('M2 0v16', B, 3).replace('/>', ' stroke-dasharray="3 1"/>') + p('M13 1v14M11 1h4M11 15h4', B, 1.5) + p('M4 8h6', R) + f('M7 5l4 3-4 3z', R),
  redline: p('M1 1l14 14', '#5b2a2a', 1.5) + f('M3 5l6 1-3 3zM8 9l6 2-4 3z', R),
  rbracket: p('M16 2H3v12h13', R, 1.5) + p('M2 3h3v3M2 13h3', K),

  dimrr: dim(R, 11) + p('M1 0v6M15 0v6M1 3h14'), dimbrush: bg + f('M7 0h3v5l3 4H3l4-4z', '#a08a4f') + dim(),
  dimpen: bg + p('M5 9l8-8', '#8f8349', 3) + dim(), dimeh: label('EH', R, K, 10),
  axese: ax + t('E', 12, 9, 10, R), exy: t('E', 4, 8, 10, R) + t('X', 12, 7, 8) + t('Y', 12, 15, 8) + p('M1 15l5-6h3') + f('M0 16l1-5 4 3z'),
  dim000: label('0.00', K, K, 8), lead0: bg + p('M2 6l5-4M4 4l1 10M5 14h9', K, 2) + t('0.0', 11, 11, 7), dim0: bg + label('0'), dim31: label('3:1'),
  dim15b: label('15', B, K, 10), dim15r: label('15', R, R), dim15: label('15', K, R), dim21: label('2±1'),
  dim15x: p('M2 1h12v7H2z', R, 1.1) + label('15', R, K), dim51: p('M1 0v8M15 0v8M1 4h14', K, 1.5) + t('ST', 8, 15, 10),
  dimoo: t('0', 3, 6, 8, B) + t('0', 13, 6, 8, B) + p('M1 15l2-8M15 7v8', K) + p('M4 11h6', R) + f('M8 8l4 3-4 3z', R),
  dimgrass: t('0000', 8, 6, 8, B) + p('M2 8l4 8M6 8l1 8M10 8l-1 8M14 8l-4 8', G, 1.5),
  dimbox: p('M2 1v14h12V1M2 3h12M4 7h8', '#2b6b6b', 1.5) + p('M3 11h10', B, 2) + f('M2 11l4-3v6zM14 11l-4-3v6z', B),
  dimx: p('M3 10V2h10v8M3 4h10', K) + p('M1 10l4 4M5 10l-4 4M11 10l4 4M15 10l-4 4', R, 1.2),
  shapesb: p('M1 1h5v5H1zM10 1h5v5h-5zM1 10h5v5H1z', '#3c8cc0') + p('M9 14q5 0 4-6', M, 1.4),
  v2: p('M1 2h14v12H1z', '#6868c8', 1.3, '#fff') + t('V2', 8, 12, 10, M),
  pencirc: p('M1 0v16M2 3h12', B) + c(9, 10, 5, '#b06078', '#f4dfe5') + p('M4 12l9-10', '#3b3b3b', 2),
  bowl: p('M1 8h14l-3 6H4z', '#3a80b4', 1.3, '#cfe9f4') + p('M6 9l9-8', '#444', 2),
  flag1: flagp('M4 1h11v8H4z'), flag2: p('M1 15L8 1', B, 2) + f('M7 3l9 4-4 7-8-5z', '#e81c24'),
  mirror: p('M6 2v11H1zM10 2v11h5z', '#444') + p('M8 0v16', R),
  array1: squares + p('M8 5v6M5 8h6', M), array2: squares + p('M4 8h8', M, 2).replace('/>', ' stroke-dasharray="2 1"/>'),
  cursor: f('M0 7l5-6 2 2 5 1 1 5 3 6H7l1-4-4-3-2 2z', '#111'),
  zero: p('M5 1v7M0 12h9', B, 1.5) + f('M2 6h6l-3 4z', B) + t('0', 12, 14, 13, R),
  recycle: p('M4 8q0-4 5-4M12 8q0 4-5 4', '#235f8f', 1.8) + f('M8 1l4 3-4 3zM8 9v6l-4-3zM1 8h6l-3 3zM9 8h6l-3-3z', '#235f8f'),
  rightred: p('M1 0l3 16', K, 1.4) + p('M4 8h8', R) + f('M9 4l6 4-6 4z', R),

  line: p('M2 14L14 2', '#444') + f('M1 13h3v3H1zM12 1h3v3h-3z', S),
  xline: p('M1 15L15 1', '#444') + f('M0 16l1-5 4 4zM16 0l-5 1 4 4z', K) + f('M7 7h3v3H7z', S),
  pline: p('M2 12h9M9 4q6-1 5 4-1 3-4 3', S, 1.5) + f('M0 11h3v3H0zM8 2h3v3H8zM10 11h3v3h-3z', S),
  polygon: p('M8 2l6 5-2 7H4L2 7z', '#555', 1.4, '#d9dfe4'),
  rect: p('M2 4h12v7H2z', '#345', 1.5, '#dde7ee') + f('M0 10h3v3H0zM13 2h3v3h-3z', S),
  arc: p('M2 14Q3 3 14 2', '#555', 1.4) + f('M0 13h3v3H0zM5 5h3v3H5zM13 1h3v3h-3z', S),
  circle: c(8, 8, 6.5, '#444', '#f4f8fa', 1.5) + p('M8 8l4-4', S) + f('M6 7h4v3H6z', S),
  cloud: p('M3 7Q-1 4 3 1.500q2-1 3.500.500Q8-.500 11 1q3 2 1 5 4 2 3 5-1 4-5 3-2 2-4 0-4 1-5-2-1-3 2-4z', '#555', 1.4, '#e6ecf4'),
  spline: p('M2 14Q3 5 7 7t7-5', '#555', 1.5),
  ellipse: '<ellipse cx="8" cy="8" rx="6.500" ry="4" fill="#dde8ef" stroke="#444" stroke-width="1.500"/>' + f('M0 6h3v3H0zM13 6h3v3h-3zM7 2h3v3H7z', S),
  ellarc: p('M2 8Q2 3 8 3t6 5q-1 4-6 4', '#555', 1.5, '#e6edf2') + f('M0 7h3v3H0zM6 11h3v3H6z', S),
  insert: p('M7 1h6l2 3v9H7z', S, 1.2, '#e2edf5') + p('M1 4h8v6H1z', '#55703b', 1.4, '#cbdc9c') + c(10, 11, 3, '#55703b', '#cbdc9c') + corner,
  block2: p('M2 3h9v6H2z', '#55703b', 1.4, '#cbdc9c') + c(11, 11, 3, '#55703b', '#cbdc9c') + f('M1 8h3v3H1z', '#244'),
  point: f('M7 7h3v3H7z', S),
  hatch: f('M3 3h10v10H3z', '#cde0ee') + p('M3 0v16M13 0v16M0 3h16M0 13h16', S, 1.3) + p('M4 6l6 6M4 10l3 3M7 4l6 6M10 4l3 3', '#678', 0.8),
  gradient: f('M3 3h10v10H3z', '#6c7278') + p('M3 0v16M13 0v16M0 3h16M0 13h16', '#222', 1.6) + f('M4 3h7L4 10z', '#434a50'),
  region: p('M1 2h10l4 5v7H1z', S, 1.4, '#d3e2ee') + c(7, 8.500, 3, S, '#f4f8fb'),
  table: p('M1 1h14v14H1zM1 5h14M1 8.500h14M1 12h14M6 1v14M11 1v14', '#4c83b4', 1.1, '#e4eef6') + f('M1 1h14v4H1z', '#7ba6cd'),
  up: p('M5 13l3-7 3 7', K, 1.8)
};

const svg = (name, flyout) => `<svg viewBox="0 0 16 16" aria-hidden="true">${icons[name]}${flyout ? corner : ''}</svg>`;

document.querySelectorAll('[data-icon]').forEach((el) => { el.innerHTML = svg(el.dataset.icon); });

// "+" marks a flyout button, ":s" and ":t" narrow or short ones, "|" a separator.
document.querySelectorAll('[data-tools]').forEach((bar) => {
  bar.innerHTML = bar.dataset.tools.split(' ').map((item) => {
    if (item === '|') return '<span class="sep"></span>';
    const [key, size = ''] = item.split(':');
    const name = key.replace('+', '');
    return `<button class="tool ${size}" aria-label="${name}">${svg(name, key.endsWith('+'))}</button>`;
  }).join('');
});
```
